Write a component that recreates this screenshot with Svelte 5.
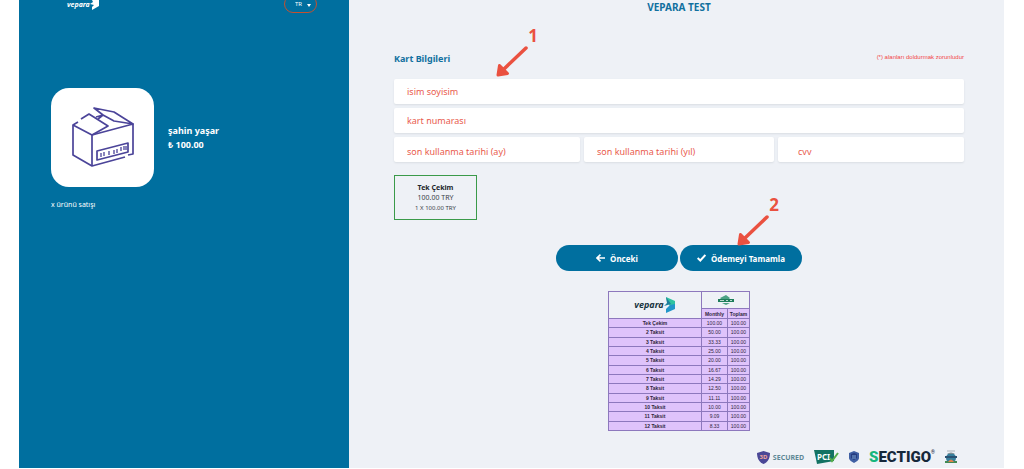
<script>
  const installments = [
    { name: 'Tek Çekim', monthly: '100.00', total: '100.00' },
    { name: '2 Taksit', monthly: '50.00', total: '100.00' },
    { name: '3 Taksit', monthly: '33.33', total: '100.00' },
    { name: '4 Taksit', monthly: '25.00', total: '100.00' },
    { name: '5 Taksit', monthly: '20.00', total: '100.00' },
    { name: '6 Taksit', monthly: '16.67', total: '100.00' },
    { name: '7 Taksit', monthly: '14.29', total: '100.00' },
    { name: '8 Taksit', monthly: '12.50', total: '100.00' },
    { name: '9 Taksit', monthly: '11.11', total: '100.00' },
    { name: '10 Taksit', monthly: '10.00', total: '100.00' },
    { name: '11 Taksit', monthly: '9.09', total: '100.00' },
    { name: '12 Taksit', monthly: '8.33', total: '100.00' }
  ];

  let language = $state('TR');
  let holder = $state('');
  let cardNumber = $state('');
  let month = $state('');
  let year = $state('');
  let cvv = $state('');
</script>

{#snippet marker(number)}
  <span class="marker">
    <b>{number}</b>
    <svg width="34" height="34" viewBox="0 0 34 34">
      <path d="M31 5L9 26" stroke="#ea5140" stroke-width="3.500" stroke-linecap="round" />
      <path d="M4.500 22.500L12.500 30.500L3 32Z" fill="#ea5140" stroke="#ea5140" stroke-width="3" stroke-linejoin="round" />
    </svg>
  </span>
{/snippet}

<div class="page">
  <aside class="sidebar">
    <header class="top">
      <a class="logo" href="#home">vepara
        <svg width="10" height="10" viewBox="0 0 10 10">
          <path d="M2 0H9V6L2 10V7L4 5L0 4L3 2Z" fill="#fff" />
        </svg>
      </a>
      <div class="language">
        <select aria-label="Dil" bind:value={language}>
          <option>TR</option>
          <option>EN</option>
        </select>
        <svg width="4" height="3" viewBox="0 0 4 3"><path d="M0 0H4L2 3Z" fill="#fff" /></svg>
      </div>
    </header>

    <div class="product">
      <div class="picture">
        <svg width="64" height="62" viewBox="0 0 64 62" fill="none" stroke="#4b4499" stroke-width="1.700" stroke-linejoin="round">
          <path d="M7 15L2 18V48L21 59L54 50" />
          <path d="M10 12L18 7L37 19L21 28L2 18" />
          <path d="M21 28V59M21 28L62 17V47L57 48" />
          <path d="M25 10L32 8L23 1L43 5L62 17L43 14L32 8L27 12" />
          <path d="M26 44L57 36V45L26 53Z" />
          <path d="M30 46V50M33 45V49M38 44V48M43 43V47M46 42V46M50 40V44M53 39V43M55 39V43" stroke-width="1.300" />
        </svg>
      </div>
      <div class="summary">
        <strong>şahin yaşar</strong>
        <strong>₺ 100.00</strong>
      </div>
    </div>
    <p class="description">x ürünü satışı</p>
  </aside>

  <main class="payment">
    <h1>VEPARA TEST</h1>

    <form onsubmit={(e) => e.preventDefault()}>
      <div class="heading">
        <h2>Kart Bilgileri</h2>
        <span class="required">(*) alanları doldurmak zorunludur</span>
        {@render marker(1)}
      </div>

      <div class="fields">
        <input class="wide" aria-label="isim soyisim" placeholder="isim soyisim" bind:value={holder} />
        <input class="wide" aria-label="kart numarası" placeholder="kart numarası" bind:value={cardNumber} />
        <input class="part" aria-label="son kullanma tarihi (ay)" placeholder="son kullanma tarihi (ay)" bind:value={month} />
        <input class="part" aria-label="son kullanma tarihi (yıl)" placeholder="son kullanma tarihi (yıl)" bind:value={year} />
        <input class="part cvv" aria-label="cvv" placeholder="cvv" bind:value={cvv} />
      </div>

      <button type="button" class="plan">
        <b>Tek Çekim</b>
        <span>100.00 TRY</span>
        <small>1 X 100.00 TRY</small>
      </button>

      <div class="actions">
        <button type="button" class="action">
          <svg width="9" height="8" viewBox="0 0 9 8" fill="none" stroke="#fff" stroke-width="1.600">
            <path d="M9 4H1.500M4.500 0.600L1 4L4.500 7.400" />
          </svg>
          Önceki
        </button>
        <button type="submit" class="action">
          <svg width="9" height="8" viewBox="0 0 9 8" fill="none" stroke="#fff" stroke-width="2">
            <path d="M0.600 4L3.300 6.500L8.400 1" />
          </svg>
          Ödemeyi Tamamla
        </button>
        {@render marker(2)}
      </div>
    </form>

    <table>
      <colgroup>
        <col class="name" />
        <col class="monthly" />
        <col />
      </colgroup>
      <thead>
        <tr class="brands">
          <th class="brand" rowspan="2">
            <span class="mark">vepara
              <svg width="12" height="16" viewBox="0 0 12 16">
                <path d="M2 0L11 4V11L6 9L3 5Z" fill="#2fc3a0" />
                <path d="M2 0L7 7L0 9L3 6Z" fill="#1d7f9c" />
                <path d="M11 7V12L2 16V12L6 8Z" fill="#2196c9" />
              </svg>
            </span>
          </th>
          <th class="brand" colspan="2">
            <svg class="bank" width="18" height="10" viewBox="0 0 18 10">
              <path d="M3 3L9 0L13 3L12 4H4ZM5 8H13L9 10Z" fill="#4ca284" />
              <path d="M1 4H17V7H1Z" fill="#1e7d5b" />
              <path d="M3 5.500H7M9 5.500H11M13 5.500H15" stroke="#b9d9cd" />
            </svg>
          </th>
        </tr>
        <tr class="columns">
          <th>Monthly</th>
          <th>Toplam</th>
        </tr>
      </thead>
      <tbody>
        {#each installments as item}
          <tr>
            <th>{item.name}</th>
            <td>{item.monthly}</td>
            <td>{item.total}</td>
          </tr>
        {/each}
      </tbody>
    </table>

    <footer>
      <span class="secured">
        <svg width="13" height="13" viewBox="0 0 13 13">
          <path d="M6.500 0L13 2C13 7 11 11 6.500 13C2 11 0 7 0 2Z" fill="#4a4796" />
          <text x="6.500" y="8" text-anchor="middle" font-size="6" font-weight="700" fill="#f0a59b">3D</text>
        </svg>
        SECURED
      </span>
      <svg width="25" height="14" viewBox="0 0 25 14">
        <path d="M0 0H20V11L3 14L2 9Z" fill="#137263" />
        <text x="3" y="10" font-size="8" font-weight="700" fill="#fff">PCI</text>
        <path d="M16 8L18 11L24 3" fill="none" stroke="#54ad48" stroke-width="2" />
      </svg>
      <svg width="10" height="12" viewBox="0 0 10 12">
        <path d="M5 0L10 2V7C10 9 7 11 5 12C3 11 0 9 0 7V2Z" fill="#3f5fa3" />
        <path d="M5 2L8 3V7L5 9L2 7V3Z" fill="#263c80" />
        <path d="M3 5H7M3 7H7" stroke="#7ea9d6" />
      </svg>
      <span class="sectigo"><i>S</i>ECTIGO<sup>®</sup></span>
      <svg width="12" height="14" viewBox="0 0 12 14">
        <path d="M2 1H10" stroke="#a9b2b8" />
        <circle cx="6" cy="8" r="5" fill="#377f9c" />
        <path d="M2 4Q6 1 10 4Z" fill="#7a8b91" />
        <path d="M0 6H12V8H0Z" fill="#2a5272" />
        <path d="M0 11H12V13H0Z" fill="#438a55" />
        <path d="M3 12Q6 7 9 12Z" fill="#e0824b" />
      </svg>
    </footer>
  </main>
</div>

<style>
  :global(body) {
    background: #fff;
  }
  * {
    box-sizing: border-box;
  }
  .page {
    display: grid;
    grid-template-columns: 330fr 655fr;
    padding: 0 20px 1px 19px;
    overflow: hidden;
    font-family: "Noto Sans", sans-serif;
  }
  svg {
    display: block;
    flex: none;
  }

  .sidebar {
    display: flex;
    flex-direction: column;
    padding: 0 32px;
    background: #006f9f;
    color: #fff;
  }
  .top {
    display: flex;
    align-items: flex-end;
    justify-content: space-between;
    height: 13px;
    padding-left: 16px;
  }
  .logo {
    display: flex;
    height: 13px;
    color: #fff;
    font-size: 7px;
    font-weight: 700;
    font-style: italic;
    line-height: 10px;
    text-decoration: none;
  }
  .language {
    position: relative;
    width: 33px;
  }
  .language select {
    display: block;
    width: 100%;
    height: 18px;
    padding: 0 0 0 10px;
    border: 1px solid #c4512f;
    border-radius: 9px;
    background: transparent;
    color: #fff;
    font-family: inherit;
    font-size: 6px;
    appearance: none;
  }
  .language svg {
    position: absolute;
    top: 9px;
    right: 6px;
  }
  .product {
    display: flex;
    align-items: center;
    gap: 14px;
    margin-top: 75px;
  }
  .picture {
    display: flex;
    align-items: center;
    justify-content: center;
    width: 103px;
    height: 99px;
    border-radius: 18px;
    background: #fff;
  }
  .summary {
    display: flex;
    flex-direction: column;
    font-size: 9px;
    line-height: 14px;
  }
  .description {
    margin: 11px 0 0;
    font-size: 7px;
    line-height: 14px;
  }

  .payment {
    display: flex;
    flex-direction: column;
    padding: 0 40px 0 45px;
    background: #eef1f6;
  }
  h1, h2 {
    margin: 0;
    color: #11709f;
    line-height: 14px;
  }
  h1 {
    font-size: 10px;
    text-align: center;
  }
  h2 {
    font-size: 9px;
  }
  .heading {
    position: relative;
    display: flex;
    justify-content: space-between;
    margin-top: 38px;
  }
  .required {
    color: #f34646;
    font-family: "Liberation Sans", sans-serif;
    font-size: 6px;
    line-height: 10px;
  }
  .fields {
    display: grid;
    grid-template-columns: 186fr 190fr 186fr;
    gap: 4px;
    margin-top: 13px;
  }
  .fields input {
    width: 100%;
    min-width: 0;
    height: 25px;
    padding: 0 13px;
    border: 0;
    border-radius: 2px;
    background: #fff;
    box-shadow: 0 1px 2px #d9dde3;
    color: #e95b4e;
    font-family: inherit;
    font-size: 9px;
  }
  .fields input::placeholder {
    color: #e95b4e;
    opacity: 1;
  }
  .fields .wide {
    grid-column: 1 / -1;
  }
  .fields .part {
    padding-top: 4px;
  }
  .fields .cvv {
    padding-left: 20px;
  }
  .plan {
    display: flex;
    flex-direction: column;
    align-items: center;
    justify-content: center;
    width: 83px;
    height: 45px;
    margin-top: 13px;
    padding: 0;
    border: 1px solid #3a9a49;
    background: transparent;
    color: #3c4148;
    font-family: inherit;
    font-size: 7px;
    line-height: 10px;
  }
  .plan b {
    color: #22262c;
  }
  .plan small {
    font-size: 6px;
  }
  .actions {
    position: relative;
    display: flex;
    justify-content: center;
    gap: 2px;
    width: 246px;
    margin: 25px auto 0;
  }
  .action {
    display: flex;
    flex: 1;
    align-items: center;
    justify-content: center;
    gap: 5px;
    height: 26px;
    padding: 0;
    border: 0;
    border-radius: 13px;
    background: #006f9f;
    color: #fff;
    font-family: inherit;
    font-size: 8px;
    font-weight: 700;
  }

  /* numbered arrows laid over the form */
  .marker {
    position: absolute;
    top: -26px;
    left: 101px;
    width: 43px;
    color: #ea5140;
    font-size: 17px;
    line-height: 20px;
    text-align: right;
    pointer-events: none;
  }
  .marker svg {
    position: absolute;
    top: 17px;
    left: 0;
  }
  .actions .marker {
    top: -50px;
    left: 180px;
  }

  table {
    width: 142px;
    height: 140px;
    margin: 20px auto 0;
    border-collapse: collapse;
    table-layout: fixed;
    background: #dfc3fb;
    color: #30263c;
    font-family: "Liberation Sans", sans-serif;
    font-size: 5px;
    line-height: 6px;
    text-align: center;
  }
  th, td {
    padding: 0;
    border: 1px solid #8d78bd;
  }
  .name {
    width: 93px;
  }
  .monthly {
    width: 26px;
  }
  .brands {
    height: 17px;
  }
  .columns {
    height: 10px;
  }
  .brand {
    background: #eef1f6;
  }
  .bank {
    margin: auto;
  }
  .mark {
    display: flex;
    align-items: center;
    justify-content: center;
    color: #17343f;
    font-family: "Noto Sans", sans-serif;
    font-size: 9px;
    font-style: italic;
  }

  footer {
    display: flex;
    align-items: center;
    justify-content: flex-end;
    gap: 10px;
    height: 22px;
    margin-top: 15px;
    padding-right: 7px;
  }
  .secured {
    display: flex;
    align-items: center;
    gap: 3px;
    color: #5d8795;
    font-size: 7px;
    font-weight: 700;
  }
  .sectigo {
    display: flex;
    color: #16283a;
    font-family: Roboto, sans-serif;
    font-size: 15px;
    font-weight: 900;
    line-height: 18px;
  }
  .sectigo i {
    color: #17b67c;
    font-style: normal;
  }
  .sectigo sup {
    font-size: 5px;
    line-height: 8px;
  }
</style>
